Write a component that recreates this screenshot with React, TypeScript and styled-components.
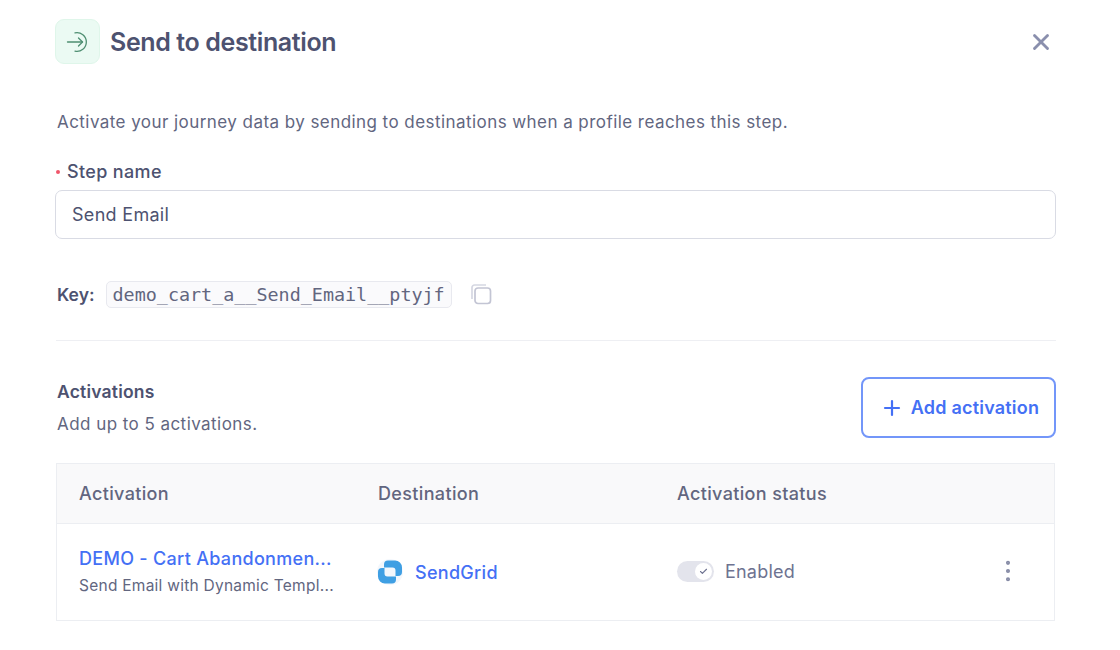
import React from "react";
import styled, { createGlobalStyle } from "styled-components";
import { Check, MoreVertical, Plus, X } from "lucide-react";

const GlobalStyle = createGlobalStyle`
  html, body {
    margin: 0;
    padding: 0;
    background: #fff;
    font-family: Inter, "Noto Sans", sans-serif;
    color: #4d5270;
  }
`;

function SendGridLogo() {
  const piece = "M11 1.500h7a7 7 0 0 1 7 7v4.500a4 4 0 0 1-4 4h-2.500v-5.500a3 3 0 0 0-3-3H7V5.500a4 4 0 0 1 4-4z";
  return (
    <LogoSvg width="26" height="26" viewBox="0 0 26 26">
      <circle cx="13" cy="13" r="13" fill="#f3f7fc" />
      <path d={piece} fill="#3f9fe3" />
      <path d={piece} fill="#3f9fe3" transform="rotate(180 13 13)" />
    </LogoSvg>
  );
}

function ArrowInIcon() {
  return (
    <svg width="24" height="24" viewBox="0 0 24 24" fill="none" stroke="#4f8f72" strokeWidth="1.3" strokeLinecap="round" strokeLinejoin="round">
      <path d="M1.500 12h15" />
      <path d="M12.500 8l4 4-4 4" />
      <path d="M9 2.800a9.400 9.400 0 1 1 0 18.400" />
    </svg>
  );
}

function CopyGlyph() {
  return (
    <CopySvg width="22" height="22" viewBox="0 0 22 22" fill="none" strokeWidth="1.7">
      <path d="M2 16V4.500A2.500 2.500 0 0 1 4.500 2H16" stroke="#d5d7e2" />
      <rect x="5" y="5" width="15.500" height="15.500" rx="3" stroke="#c3c5d4" />
    </CopySvg>
  );
}

export default function App() {
  return (
    <>
      <GlobalStyle />
      <Page>
        <Header>
          <TitleGroup>
            <IconTile>
              <ArrowInIcon />
            </IconTile>
            <Title>Send to destination</Title>
          </TitleGroup>
          <CloseButton>
            <X size={26} strokeWidth={2.6} />
          </CloseButton>
        </Header>

        <Description>
          Activate your journey data by sending to destinations when a profile reaches this step.
        </Description>

        <FieldLabel>Step name</FieldLabel>
        <NameInput defaultValue="Send Email" />

        <KeyRow>
          <KeyLabel>Key:</KeyLabel>
          <KeyCode>demo_cart_a__Send_Email__ptyjf</KeyCode>
          <CopyGlyph />
        </KeyRow>

        <Divider />

        <ActivationsHeader>
          <div>
            <SectionTitle>Activations</SectionTitle>
            <SectionHint>Add up to 5 activations.</SectionHint>
          </div>
          <AddButton>
            <Plus size={24} strokeWidth={2.2} />
            Add activation
          </AddButton>
        </ActivationsHeader>

        <Table>
          <HeadRow>
            <HeadCell>Activation</HeadCell>
            <HeadCell>Destination</HeadCell>
            <HeadCell>Activation status</HeadCell>
          </HeadRow>
          <BodyRow>
            <Cell>
              <ActivationName>DEMO - Cart Abandonmen...</ActivationName>
              <ActivationType>Send Email with Dynamic Templ...</ActivationType>
            </Cell>
            <DestinationCell>
              <SendGridLogo />
              <DestinationName>SendGrid</DestinationName>
            </DestinationCell>
            <StatusCell>
              <Toggle>
                <Knob>
                  <Check size={9} strokeWidth={3} color="#6e7391" />
                </Knob>
              </Toggle>
              <StatusText>Enabled</StatusText>
              <MenuIcon size={28} strokeWidth={1.5} />
            </StatusCell>
          </BodyRow>
        </Table>
      </Page>
    </>
  );
}

const Page = styled.div`
  width: 1120px;
  height: 650px;
  box-sizing: border-box;
  padding: 19px 64px 0 55px;
  overflow: hidden;
`;

const Header = styled.div`
  display: flex;
  align-items: center;
  justify-content: space-between;
  height: 45px;
`;

const TitleGroup = styled.div`
  display: flex;
  align-items: center;
  gap: 10px;
`;

const IconTile = styled.div`
  width: 45px;
  height: 45px;
  box-sizing: border-box;
  display: flex;
  align-items: center;
  justify-content: center;
  background: #ebfaf3;
  border: 1px solid #dff6ea;
  border-radius: 9px;
`;

const Title = styled.h1`
  margin: 0;
  font-size: 25px;
  font-weight: 600;
  letter-spacing: -0.38px;
  color: #4d5270;
`;

const CloseButton = styled.div`
  display: flex;
  margin-right: 2px;
  color: #8a8fad;
`;

const Description = styled.p`
  margin: 47px 0 0 2px;
  font-size: 17px;
  letter-spacing: 0.44px;
  line-height: 22px;
  color: #62667f;
`;

const FieldLabel = styled.label`
  display: block;
  position: relative;
  margin: 28px 0 0 12px;
  font-size: 18px;
  font-weight: 500;
  letter-spacing: 0.35px;
  line-height: 22px;
  color: #4d5270;

  &::before {
    content: "";
    position: absolute;
    left: -11px;
    top: 9px;
    width: 4px;
    height: 4px;
    border-radius: 50%;
    background: #f0556a;
  }
`;

const NameInput = styled.input`
  display: block;
  width: 100%;
  height: 49px;
  box-sizing: border-box;
  margin-top: 7px;
  padding: 0 16px;
  border: 1px solid #d9dbe4;
  border-radius: 7px;
  outline: none;
  font-family: inherit;
  font-size: 18px;
  letter-spacing: 0.3px;
  color: #4d5270;
`;

const KeyRow = styled.div`
  display: flex;
  align-items: center;
  height: 28px;
  margin: 41px 0 0 2px;
`;

const KeyLabel = styled.span`
  font-size: 17.500px;
  font-weight: 600;
  color: #4d5270;
`;

const KeyCode = styled.code`
  margin-left: 11px;
  padding: 0 6px;
  height: 25px;
  line-height: 25px;
  background: #fafafc;
  border: 1px solid #e8e9ef;
  border-radius: 5px;
  font-family: "DejaVu Sans Mono", monospace;
  font-size: 18.400px;
  color: #62667f;
`;

const CopySvg = styled.svg`
  margin-left: 18px;
`;

const Divider = styled.hr`
  margin: 32px 0 0 1px;
  border: none;
  border-top: 1px solid #eeeff3;
`;

const ActivationsHeader = styled.div`
  display: flex;
  align-items: flex-start;
  justify-content: space-between;
  margin: 36px 0 0 2px;
`;

const SectionTitle = styled.div`
  margin-top: 4px;
  font-size: 17.500px;
  font-weight: 600;
  letter-spacing: 0.2px;
  line-height: 22px;
  color: #4d5270;
`;

const SectionHint = styled.div`
  margin-top: 10px;
  font-size: 17px;
  letter-spacing: 0.45px;
  line-height: 22px;
  color: #62667f;
`;

const AddButton = styled.button`
  display: flex;
  align-items: center;
  justify-content: center;
  gap: 7px;
  width: 195px;
  height: 61px;
  box-sizing: border-box;
  padding: 0 0 0 2px;
  background: #fff;
  border: 2px solid #7396f9;
  border-radius: 8px;
  font-family: inherit;
  font-size: 18px;
  font-weight: 600;
  letter-spacing: 0.2px;
  color: #4470f5;
`;

const Table = styled.div`
  margin: 25px 1px 0 1px;
  border: 1px solid #eceef2;
`;

const columns = "299px 299px 1fr";

const HeadRow = styled.div`
  display: grid;
  grid-template-columns: ${columns};
  align-items: center;
  height: 59px;
  padding-left: 22px;
  background: #f9f9fa;
  border-bottom: 1px solid #eceef2;
`;

const HeadCell = styled.div`
  font-size: 18px;
  font-weight: 500;
  letter-spacing: 0.35px;
  color: #62667f;
`;

const BodyRow = styled.div`
  display: grid;
  grid-template-columns: ${columns};
  align-items: center;
  height: 96px;
  padding-left: 22px;
`;

const Cell = styled.div`
  display: flex;
  flex-direction: column;
  gap: 6px;
`;

const ActivationName = styled.div`
  font-size: 18px;
  font-weight: 500;
  letter-spacing: 0.3px;
  line-height: 22px;
  color: #4470f5;
`;

const ActivationType = styled.div`
  font-size: 15.500px;
  letter-spacing: 0.25px;
  line-height: 20px;
  color: #62667f;
`;

const DestinationCell = styled.div`
  display: flex;
  align-items: center;
  gap: 12px;
`;

const LogoSvg = styled.svg`
  margin-left: -1px;
`;

const DestinationName = styled.span`
  font-size: 18px;
  font-weight: 500;
  letter-spacing: 0.3px;
  color: #4470f5;
`;

const StatusCell = styled.div`
  display: flex;
  align-items: center;
  height: 22px;
  margin-top: -2px;
`;

const Toggle = styled.div`
  display: flex;
  align-items: center;
  justify-content: flex-end;
  width: 37px;
  height: 21px;
  padding: 2px;
  box-sizing: border-box;
  background: #e3e4ec;
  border-radius: 11px;
`;

const Knob = styled.div`
  display: flex;
  align-items: center;
  justify-content: center;
  width: 17px;
  height: 17px;
  background: #fff;
  border-radius: 50%;
`;

const StatusText = styled.span`
  margin-left: 11px;
  font-size: 18px;
  letter-spacing: 0.2px;
  color: #6e7391;
`;

const MenuIcon = styled(MoreVertical)`
  margin-left: auto;
  margin-right: 32px;
  color: #858aa5;
`;
